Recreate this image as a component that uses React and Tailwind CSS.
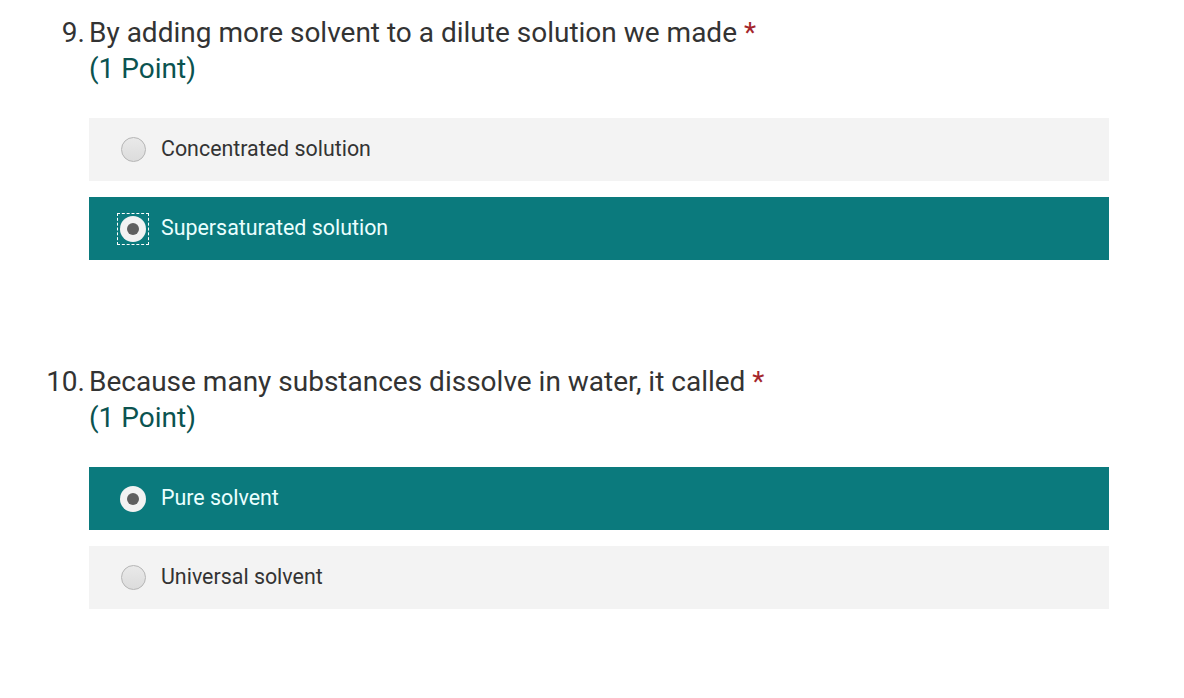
import React from "react";

const font = { fontFamily: "Roboto, 'Noto Sans', sans-serif" };

function Radio({ checked, focus }) {
  return (
    <div className={`flex h-[32px] w-[32px] shrink-0 items-center justify-center ${focus ? "border border-dashed border-white" : ""}`}>
      {checked ? (
        <div className="flex h-[26px] w-[26px] items-center justify-center rounded-full bg-[#f2f2f2]">
          <div className="h-[12px] w-[12px] rounded-full bg-[#5f5f5f]" />
        </div>
      ) : (
        <div className="h-[25px] w-[25px] rounded-full border border-[#b5b5b5] bg-gradient-to-b from-[#e9e9e9] to-[#dcdcdc]" />
      )}
    </div>
  );
}

function Option({ label, checked, focus }) {
  return (
    <div className={`flex h-[63px] items-center pl-[28px] ${checked ? "bg-[#0b7a7d]" : "bg-[#f3f3f3]"}`}>
      <Radio checked={checked} focus={focus} />
      <span className={`ml-[12px] text-[21.4px] ${checked ? "text-[#eaffff]" : "text-[#333333]"}`}>{label}</span>
    </div>
  );
}

function Question({ num, title, options }) {
  return (
    <div>
      <div className="flex">
        <div className="w-[89px] shrink-0 pr-[4px] text-right text-[28px] leading-[36px] text-[#333333]">{num}.</div>
        <div className="text-[28px] leading-[36px]">
          <div className="text-[#333333]">
            {title} <span className="text-[#a4262c]">*</span>
          </div>
          <div className="text-[#0b5350]">(1 Point)</div>
        </div>
      </div>
      <div className="ml-[89px] mr-[75px] mt-[31px] flex flex-col gap-[16px]">
        {options.map((o) => (
          <Option key={o.label} {...o} />
        ))}
      </div>
    </div>
  );
}

export default function App() {
  return (
    <div className="h-[698px] w-[1184px] bg-white pt-[15px]" style={font}>
      <Question
        num={9}
        title="By adding more solvent to a dilute solution we made"
        options={[
          { label: "Concentrated solution" },
          { label: "Supersaturated solution", checked: true, focus: true },
        ]}
      />
      <div className="h-[104px]" />
      <Question
        num={10}
        title="Because many substances dissolve in water, it called"
        options={[
          { label: "Pure solvent", checked: true },
          { label: "Universal solvent" },
        ]}
      />
    </div>
  );
}
